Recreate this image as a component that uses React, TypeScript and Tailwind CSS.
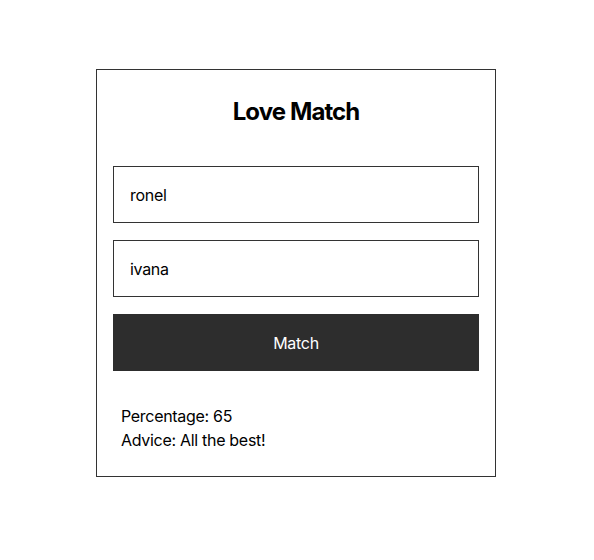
import { useState } from "react";

export default function App() {
  const [first, setFirst] = useState("ronel");
  const [second, setSecond] = useState("ivana");

  return (
    <main className="min-h-screen bg-white pt-[69px] font-['Inter',sans-serif] tracking-[-0.3px] text-black">
      <div className="ml-[96px] w-[400px] border border-[#333] px-4 pt-[26px] pb-6">
        <h1 className="text-center text-2xl leading-8 font-bold tracking-[-0.9px]">Love Match</h1>

        <div className="mt-[38px] flex flex-col gap-[17px]">
          <input
            value={first}
            onChange={(e) => setFirst(e.target.value)}
            className="h-[57px] w-full border border-[#333] px-4 text-base tracking-[-0.3px] outline-none"
          />
          <input
            value={second}
            onChange={(e) => setSecond(e.target.value)}
            className="h-[57px] w-full border border-[#333] px-4 text-base tracking-[-0.3px] outline-none"
          />
          <button className="h-[57px] w-full bg-[#2d2d2d] text-base tracking-[-0.3px] text-white">Match</button>
        </div>

        {/* result */}
        <div className="mt-[33px] px-2 text-base leading-6">
          <p>Percentage: 65</p>
          <p>Advice: All the best!</p>
        </div>
      </div>
    </main>
  );
}
